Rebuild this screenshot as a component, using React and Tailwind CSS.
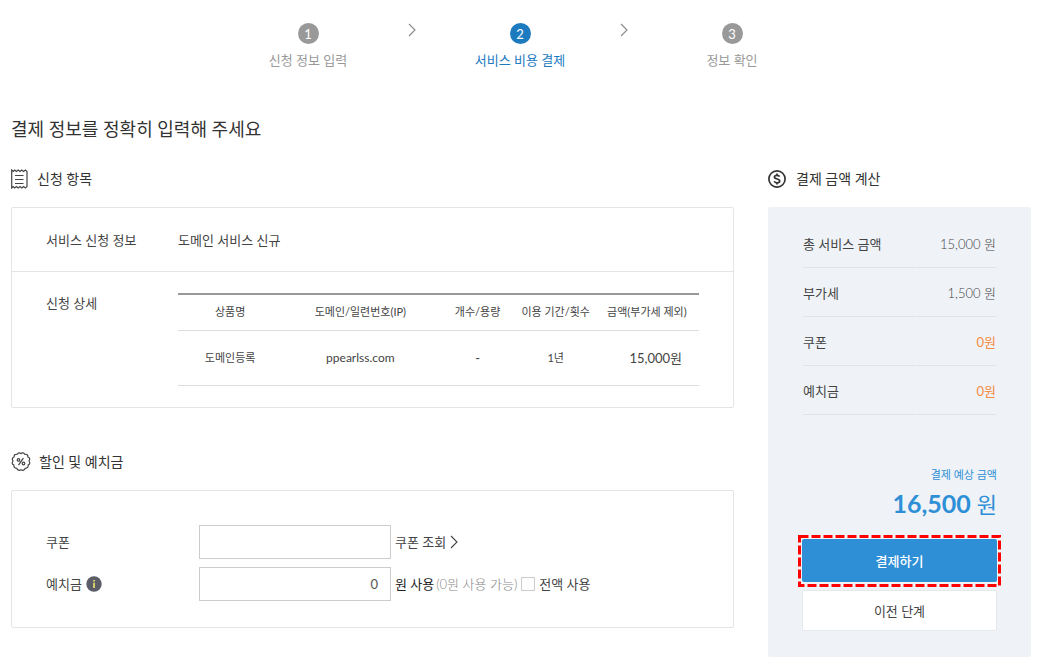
import React from "react";

const steps = [
  { n: 1, label: "신청 정보 입력" },
  { n: 2, label: "서비스 비용 결제", active: true },
  { n: 3, label: "정보 확인" },
];

const amounts = [
  { label: "총 서비스 금액", value: "15,000 원" },
  { label: "부가세", value: "1,500 원" },
  { label: "쿠폰", value: "0원", accent: true },
  { label: "예치금", value: "0원", accent: true },
];

function Chevron({ className }) {
  return (
    <svg className={className} width="8" height="14" viewBox="0 0 8 14" fill="none" stroke="currentColor" strokeWidth="1.1" aria-hidden="true">
      <path d="M1 1l6 6-6 6" />
    </svg>
  );
}

function ReceiptIcon() {
  return (
    <svg width="18" height="20" viewBox="1 0 18 20" fill="none" stroke="#444" strokeWidth="1.2" aria-hidden="true">
      <path d="M1.700 1l1.500 1.400L4.700 1l1.700 1.400L8.200 1 10 2.400 11.800 1l1.800 1.400L15.400 1l1.600 1.400V17.600L15.400 19l-1.800-1.400L11.800 19 10 17.600 8.200 19l-1.800-1.400L4.700 19l-1.500-1.400L1.700 19z" />
      <path d="M5 6.500h8.500M5 10.500h8.500M5 14.500h8.500" />
    </svg>
  );
}

function DiscountIcon() {
  return (
    <svg width="20" height="20" viewBox="0 0 20 20" fill="none" stroke="#444" strokeWidth="1.2" strokeLinejoin="round" aria-hidden="true">
      <path d="M10 1.600Q11.900 -.2 13.900 2.300 17 1.900 16.900 5 19.800 6.200 18 9 19.900 11.600 17.200 12.900 17.400 16.100 14.300 16.300 13 19.300 10 17.800 7 19.300 5.700 16.300 2.600 16.100 2.800 12.900 .1 11.600 2 9 .2 6.200 3.100 5 3 1.900 6.100 2.300 8.100 -.2 10 1.600z" />
      <path d="M12.400 6.200l-4.900 7" />
      <circle cx="7.500" cy="7.900" r="1.300" />
      <circle cx="12.500" cy="11.500" r="1.300" />
    </svg>
  );
}

function DollarIcon() {
  return (
    <svg width="20" height="20" viewBox="0 0 20 20" fill="none" stroke="#333" strokeWidth="1.700" aria-hidden="true">
      <circle cx="9" cy="10" r="8.100" />
      <path d="M11.600 7.600C11.200 6.700 10.200 6.300 9 6.300c-1.500 0-2.600.6-2.600 1.800 0 2.700 5.300 1.100 5.300 3.800 0 1.200-1.200 1.900-2.700 1.900-1.400 0-2.400-.5-2.800-1.500M9 4.600v1.700M9 13.800v1.700" />
    </svg>
  );
}

function SectionTitle({ icon, children }) {
  return (
    <h2 className="flex h-6 items-center gap-2 text-sm text-[#333]">
      {icon}
      {children}
    </h2>
  );
}

export default function App() {
  return (
    <main className="bg-white pt-[23px] pr-[9px] pb-2 pl-[11px] font-['Lato','Noto_Sans_CJK_KR',sans-serif] text-[13px] leading-5 text-[#444]">
      <ol className="flex justify-center pr-0.5">
        {steps.map((s, i) => (
          <React.Fragment key={s.n}>
            {i > 0 && (
              <li aria-hidden="true" className="flex w-8 justify-center pr-1 text-[#888]">
                <Chevron />
              </li>
            )}
            <li
              aria-current={s.active ? "step" : undefined}
              className={`flex w-[180px] flex-col items-center gap-1.5 ${s.active ? "text-[#1c7abf]" : "text-[#999]"}`}
            >
              <span className={`flex size-[21px] items-center justify-center rounded-full text-white ${s.active ? "bg-[#1c7abf]" : "bg-[#999]"}`}>
                {s.n}
              </span>
              {s.label}
            </li>
          </React.Fragment>
        ))}
      </ol>

      <h1 className="mt-[45px] text-lg leading-7 text-[#333]">결제 정보를 정확히 입력해 주세요</h1>

      <div className="mt-6 flex items-start gap-[34px]">
        <div className="min-w-0 flex-1">
          <section>
            <SectionTitle icon={<ReceiptIcon />}>신청 항목</SectionTitle>
            <div className="mt-4 rounded-xs border border-[#e5e5e5]">
              <dl className="flex h-16 items-center border-b border-[#e5e5e5] px-[34px]">
                <dt className="w-[132px]">서비스 신청 정보</dt>
                <dd>도메인 서비스 신규</dd>
              </dl>
              <div className="flex px-[34px] py-[21px]">
                <h3 className="w-[132px] shrink-0">신청 상세</h3>
                <table className="w-full table-fixed border-t-2 border-[#999] text-center text-[11px]">
                  <thead>
                    <tr className="h-9 border-b border-[#ddd]">
                      <th className="w-[20%] font-normal">상품명</th>
                      <th className="w-[30%] font-normal">도메인/일련번호(IP)</th>
                      <th className="w-[15%] font-normal">개수/용량</th>
                      <th className="w-[15%] font-normal">이용 기간/횟수</th>
                      <th className="w-[20%] font-normal">금액(부가세 제외)</th>
                    </tr>
                  </thead>
                  <tbody>
                    <tr className="h-[55px] border-b border-[#ddd]">
                      <td>도메인등록</td>
                      <td className="text-xs">ppearlss.com</td>
                      <td className="text-[13px]">-</td>
                      <td>1년</td>
                      <td className="pr-[17px] text-right text-[13px]">15,000원</td>
                    </tr>
                  </tbody>
                </table>
              </div>
            </div>
          </section>

          <section className="mt-[42px]">
            <SectionTitle icon={<DiscountIcon />}>할인 및 예치금</SectionTitle>
            <form className="mt-4 flex flex-col gap-2 rounded-xs border border-[#e5e5e5] px-[34px] pt-[34px] pb-[26px]">
              <div className="flex items-center">
                <label htmlFor="coupon" className="w-[153px]">쿠폰</label>
                <input id="coupon" type="text" className="h-[34px] w-[192px] border border-[#ccc] px-3" />
                <a href="#coupons" className="ml-1 flex items-center gap-1">
                  쿠폰 조회
                  <Chevron />
                </a>
              </div>
              <div className="flex items-center">
                <label htmlFor="deposit" className="flex w-[153px] items-center gap-1">
                  예치금
                  <svg width="16" height="16" viewBox="0 0 16 16" aria-hidden="true">
                    <circle cx="8" cy="8" r="7.700" fill="#5b5d68" />
                    <path d="M7.200 4h1.700v1.600H7.200zM7.200 6.800h1.700V12H7.200z" fill="#f0e36a" />
                  </svg>
                </label>
                <input id="deposit" type="text" defaultValue="0" className="h-[34px] w-[192px] border border-[#ccc] px-3 text-right text-[#555]" />
                <span className="ml-1 text-[#222]">원 사용</span>
                <span className="ml-0.5 font-light text-[#888]">(0원 사용 가능)</span>
                <label className="ml-1 flex items-center gap-1">
                  <input type="checkbox" className="size-3.5 appearance-none border border-[#ccc] bg-white checked:bg-[#2e8fd6]" />
                  전액 사용
                </label>
              </div>
            </form>
          </section>
        </div>

        <section className="w-[263px] shrink-0">
          <SectionTitle icon={<DollarIcon />}>결제 금액 계산</SectionTitle>
          <div className="mt-4 rounded-xs bg-[#eff3f8] px-[34px] pt-3 pb-[26px]">
            <dl className="px-px">
              {amounts.map((a) => (
                <div key={a.label} className="flex gap-px">
                  <dt className="flex h-[49px] flex-1 items-center border-b border-[#e0e4e6] pt-0.5">{a.label}</dt>
                  <dd className={`flex h-[49px] w-[79px] items-center justify-end border-b border-[#e0e4e6] pt-0.5 ${a.accent ? "text-[#f58a42]" : "font-light"}`}>
                    {a.value}
                  </dd>
                </div>
              ))}
            </dl>
            <div className="mt-[50px] text-right text-[#2e8fd6]">
              <p className="text-[11px]">결제 예상 금액</p>
              <p className="flex items-baseline justify-end gap-1.5 text-[22px] leading-9">
                <strong className="text-[25px] font-bold">16,500</strong> 원
              </p>
            </div>
            <div className="relative mt-4">
              <button type="button" className="h-[43px] w-full rounded-xs bg-[#2e8fd6] font-medium text-white">결제하기</button>
              <svg className="pointer-events-none absolute -inset-x-1 -top-1 h-[52px] w-[203px]" viewBox="0 0 203 52" fill="none" stroke="#f00" strokeWidth="3" strokeDasharray="9 3" aria-hidden="true">
                <rect x="1.500" y="1.500" width="200" height="49" />
              </svg>
            </div>
            <button type="button" className="mt-2 h-[41px] w-full rounded-xs border border-[#e5e8ea] bg-white">이전 단계</button>
          </div>
        </section>
      </div>
    </main>
  );
}
